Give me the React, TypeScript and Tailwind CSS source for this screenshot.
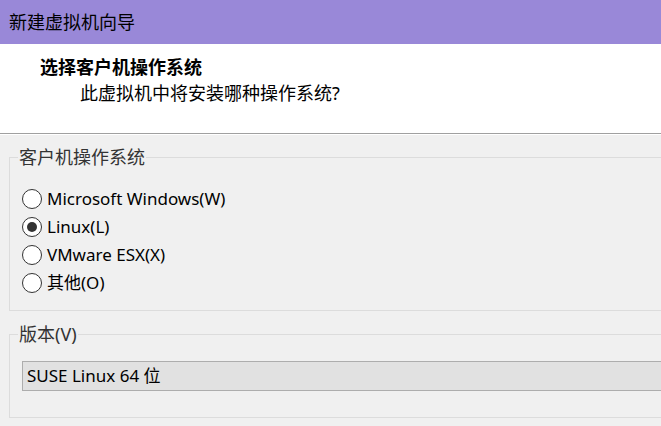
import React from "react";

const font = { fontFamily: '"Noto Sans", "Noto Sans CJK SC", sans-serif' };

const osOptions = [
  { label: "Microsoft Windows(W)", checked: false },
  { label: "Linux(L)", checked: true },
  { label: "VMware ESX(X)", checked: false },
  { label: "其他(O)", checked: false },
];

const Radio = ({ checked }: { checked: boolean }) => (
  <span className="flex h-[20px] w-[20px] shrink-0 items-center justify-center rounded-full border border-[#333333] bg-white">
    {checked && <span className="h-[10px] w-[10px] rounded-full bg-[#333333]" />}
  </span>
);

export default function App() {
  return (
    <div
      className="flex h-[426px] w-[661px] flex-col overflow-hidden bg-[#f0f0f0] text-black"
      style={font}
    >
      {/* title bar */}
      <div className="flex h-[44px] shrink-0 items-center bg-[#9988d8] pl-[9px] text-[18px]">
        新建虚拟机向导
      </div>

      {/* header */}
      <div className="h-[90px] shrink-0 border-b border-[#a0a0a0] bg-white">
        <div className="pl-[40px] pt-[10px] text-[18px] font-bold leading-[26px]">
          选择客户机操作系统
        </div>
        <div className="pl-[80px] pt-px text-[18px] leading-[24px]">
          此虚拟机中将安装哪种操作系统?
        </div>
      </div>
      <div className="h-px shrink-0 bg-white" />

      {/* guest os group */}
      <div className="relative ml-[9px] mt-[22px] h-[154px] shrink-0 border border-r-0 border-[#dcdcdc]">
        <span className="absolute left-[8px] top-[-13px] bg-[#f0f0f0] px-px text-[18px] leading-[24px] text-[#333333]">
          客户机操作系统
        </span>
        <div className="flex flex-col pl-[12px] pt-[27px]">
          {osOptions.map((o) => (
            <div key={o.label} className="flex h-[28px] items-center gap-[5px] text-[17px]">
              <Radio checked={o.checked} />
              <span>{o.label}</span>
            </div>
          ))}
        </div>
      </div>

      {/* version group */}
      <div className="relative ml-[9px] mt-[23px] h-[84px] shrink-0 border border-r-0 border-[#dcdcdc]">
        <span className="absolute left-[8px] top-[-13px] bg-[#f0f0f0] px-px text-[18px] leading-[24px] text-[#333333]">
          版本(V)
        </span>
        <div className="ml-[12px] mt-[26px] flex h-[30px] items-center border border-r-0 border-[#adadad] bg-[#e1e1e1] pl-[4px] text-[17px]">
          SUSE Linux 64 位
        </div>
      </div>
    </div>
  );
}
